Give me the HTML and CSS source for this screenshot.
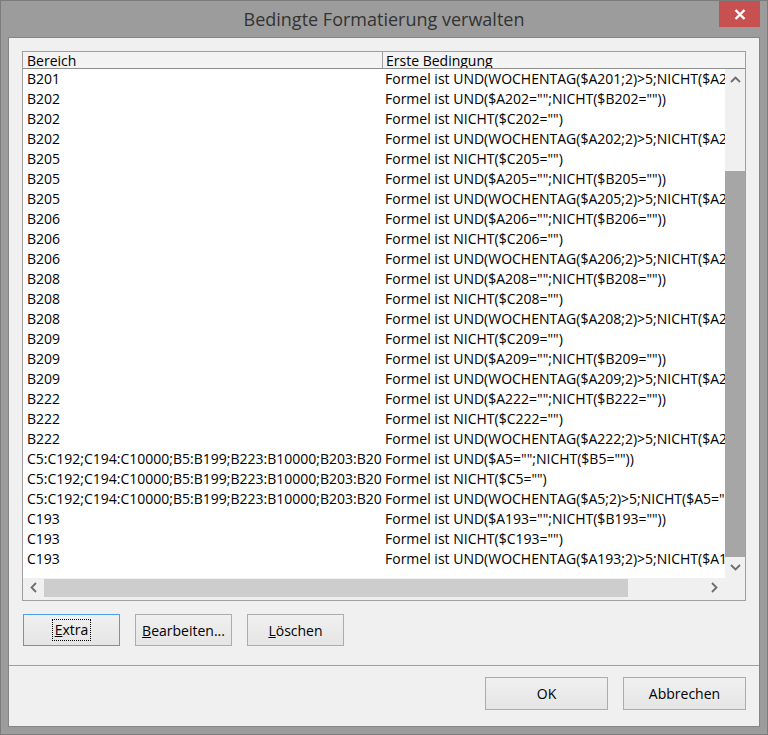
FILE: index.html
```html
<!DOCTYPE html>
<html lang="de">
<head>
    <meta charset="UTF-8">
    <meta name="viewport" content="width=device-width, initial-scale=1.0">
    <title>Bedingte Formatierung verwalten</title>
    <link rel="stylesheet" href="styles.css">
</head>
<body>
    <div class="window">
        <div class="titlebar">
            <span></span>
            <span class="title">Bedingte Formatierung verwalten</span>
            <button class="close" type="button" aria-label="Schließen">
                <svg width="12" height="11" viewBox="0 0 12 11"><path d="M1.5 1 L10.5 10 M10.5 1 L1.5 10" stroke="#fff" stroke-width="2.4" fill="none"/></svg>
            </button>
        </div>

        <div class="client">
            <div class="list">
                <div class="list-header">
                    <div class="col-a">Bereich</div>
                    <div class="col-b">Erste Bedingung</div>
                </div>

                <div class="rows">
                    <div class="row"><span>B201</span><span>Formel ist UND(WOCHENTAG($A201;2)&gt;5;NICHT($A201=""))</span></div>
                    <div class="row"><span>B202</span><span>Formel ist UND($A202="";NICHT($B202=""))</span></div>
                    <div class="row"><span>B202</span><span>Formel ist NICHT($C202="")</span></div>
                    <div class="row"><span>B202</span><span>Formel ist UND(WOCHENTAG($A202;2)&gt;5;NICHT($A202=""))</span></div>
                    <div class="row"><span>B205</span><span>Formel ist NICHT($C205="")</span></div>
                    <div class="row"><span>B205</span><span>Formel ist UND($A205="";NICHT($B205=""))</span></div>
                    <div class="row"><span>B205</span><span>Formel ist UND(WOCHENTAG($A205;2)&gt;5;NICHT($A205=""))</span></div>
                    <div class="row"><span>B206</span><span>Formel ist UND($A206="";NICHT($B206=""))</span></div>
                    <div class="row"><span>B206</span><span>Formel ist NICHT($C206="")</span></div>
                    <div class="row"><span>B206</span><span>Formel ist UND(WOCHENTAG($A206;2)&gt;5;NICHT($A206=""))</span></div>
                    <div class="row"><span>B208</span><span>Formel ist UND($A208="";NICHT($B208=""))</span></div>
                    <div class="row"><span>B208</span><span>Formel ist NICHT($C208="")</span></div>
                    <div class="row"><span>B208</span><span>Formel ist UND(WOCHENTAG($A208;2)&gt;5;NICHT($A208=""))</span></div>
                    <div class="row"><span>B209</span><span>Formel ist NICHT($C209="")</span></div>
                    <div class="row"><span>B209</span><span>Formel ist UND($A209="";NICHT($B209=""))</span></div>
                    <div class="row"><span>B209</span><span>Formel ist UND(WOCHENTAG($A209;2)&gt;5;NICHT($A209=""))</span></div>
                    <div class="row"><span>B222</span><span>Formel ist UND($A222="";NICHT($B222=""))</span></div>
                    <div class="row"><span>B222</span><span>Formel ist NICHT($C222="")</span></div>
                    <div class="row"><span>B222</span><span>Formel ist UND(WOCHENTAG($A222;2)&gt;5;NICHT($A222=""))</span></div>
                    <div class="row"><span>C5:C192;C194:C10000;B5:B199;B223:B10000;B203:B20</span><span>Formel ist UND($A5="";NICHT($B5=""))</span></div>
                    <div class="row"><span>C5:C192;C194:C10000;B5:B199;B223:B10000;B203:B20</span><span>Formel ist NICHT($C5="")</span></div>
                    <div class="row"><span>C5:C192;C194:C10000;B5:B199;B223:B10000;B203:B20</span><span>Formel ist UND(WOCHENTAG($A5;2)&gt;5;NICHT($A5=""))</span></div>
                    <div class="row"><span>C193</span><span>Formel ist UND($A193="";NICHT($B193=""))</span></div>
                    <div class="row"><span>C193</span><span>Formel ist NICHT($C193="")</span></div>
                    <div class="row"><span>C193</span><span>Formel ist UND(WOCHENTAG($A193;2)&gt;5;NICHT($A193=""))</span></div>
                </div>

                <!-- vertical scrollbar, scrolled to the end -->
                <div class="vscroll">
                    <div class="sbtn">
                        <svg width="11" height="7" viewBox="0 0 11 7"><path d="M1 6 L5.5 1.5 L10 6" stroke="#6d6d6d" stroke-width="1.8" fill="none"/></svg>
                    </div>
                    <div class="vtrack"><div class="vthumb"></div></div>
                    <div class="sbtn">
                        <svg width="11" height="7" viewBox="0 0 11 7"><path d="M1 1 L5.5 5.5 L10 1" stroke="#6d6d6d" stroke-width="1.8" fill="none"/></svg>
                    </div>
                </div>

                <div class="hscroll">
                    <div class="sbtn">
                        <svg width="7" height="11" viewBox="0 0 7 11"><path d="M6 1 L1.5 5.5 L6 10" stroke="#6d6d6d" stroke-width="1.8" fill="none"/></svg>
                    </div>
                    <div class="htrack"><div class="hthumb"></div></div>
                    <div class="sbtn">
                        <svg width="7" height="11" viewBox="0 0 7 11"><path d="M1 1 L5.5 5.5 L1 10" stroke="#6d6d6d" stroke-width="1.8" fill="none"/></svg>
                    </div>
                </div>
                <div class="corner"></div>
            </div>

            <div class="actions">
                <button type="button" class="btn default"><span class="focus"><u>E</u>xtra</span></button>
                <button type="button" class="btn"><u>B</u>earbeiten...</button>
                <button type="button" class="btn"><u>L</u>öschen</button>
            </div>

            <div class="separator"></div>

            <div class="footer">
                <button type="button" class="btn wide">OK</button>
                <button type="button" class="btn wide">Abbrechen</button>
            </div>
        </div>
    </div>
</body>
</html>
```

FILE: styles.css
```css
:root {
    --frame: #9c9c9c;
    --frame-edge: #7c7c7c;
    --face: #f0f0f0;
    --border-soft: #a0a0a0;
    --btn-border: #acacac;
    --text-dark: #000;
}

* {
    margin: 0;
    padding: 0;
    box-sizing: border-box;
    font-family: 'Open Sans', 'Noto Sans', sans-serif;
}

body {
    width: 768px;
    height: 735px;
    overflow: hidden;
}

.window {
    width: 768px;
    height: 735px;
    background: var(--frame);
    border: 1px solid var(--frame-edge);
    padding: 0 7px 7px;
    display: flex;
    flex-direction: column;
}

.titlebar {
    height: 36px;
    display: grid;
    grid-template-columns: 41px 1fr 41px;
}

.title {
    text-align: center;
    font-size: 18px;
    line-height: 24px;
    padding-top: 6px;
    color: #333;
}

.close {
    width: 41px;
    height: 26px;
    border: none;
    background: #c75050;
    display: flex;
    align-items: center;
    justify-content: center;
}

.client {
    flex: 1;
    background: var(--face);
    border: 1px solid #858585;
    display: flex;
    flex-direction: column;
}

.list {
    margin: 13px 13px 0;
    height: 550px;
    border: 1px solid var(--border-soft);
    background: #fff;
    display: grid;
    grid-template-columns: 1fr 20px;
    grid-template-rows: 17px 509px 22px;
}

.list-header {
    grid-column: 1 / 3;
    display: grid;
    grid-template-columns: 360px 1fr;
    background: #f3f3f3;
    border-bottom: 1px solid #8e8e8e;
    font-size: 14px;
    line-height: 16px;
    color: var(--text-dark);
    overflow: hidden;
}

.list-header .col-a {
    padding: 1px 0 0 4px;
    border-right: 1px solid var(--border-soft);
    overflow: hidden;
}

.list-header .col-b {
    padding: 1px 0 0 3px;
    overflow: hidden;
}

.rows {
    overflow: hidden;
}

.row {
    display: grid;
    grid-template-columns: 360px 1fr;
    height: 20px;
    font-size: 14px;
    line-height: 20px;
    color: var(--text-dark);
    white-space: nowrap;
}

.row span {
    overflow: hidden;
}

.row span:first-child {
    padding-left: 4px;
}

.row span:last-child {
    padding-left: 2px;
}

.vscroll {
    background: var(--face);
    display: flex;
    flex-direction: column;
}

.sbtn {
    flex: 0 0 21px;
    display: flex;
    align-items: center;
    justify-content: center;
}

.vtrack {
    flex: 1;
    display: flex;
    flex-direction: column;
    justify-content: flex-end;
}

.vthumb {
    height: 386px;
    background: #a6a6a6;
}

.hscroll {
    background: var(--face);
    display: flex;
    padding-bottom: 3px;
}

.htrack {
    flex: 1;
    padding-top: 1px;
}

.hthumb {
    width: 584px;
    height: 100%;
    background: #cdcdcd;
}

.corner {
    background: var(--face);
}

.actions {
    display: flex;
    gap: 15px;
    padding: 13px 0 0 14px;
}

.btn {
    width: 97px;
    height: 32px;
    border: 1px solid var(--btn-border);
    background: linear-gradient(#f0f0f0, #e5e5e5);
    font-size: 14px;
    color: var(--text-dark);
    display: flex;
    align-items: center;
    justify-content: center;
}

.btn.default {
    border-color: #4a9ee9;
}

.btn .focus {
    outline: 1px dotted #000;
    padding: 0 2px;
    line-height: 20px;
}

.btn.wide {
    width: 123px;
    height: 33px;
}

.separator {
    margin-top: 19px;
    border-top: 1px solid #a0a0a0;
}

.footer {
    flex: 1;
    display: flex;
    justify-content: flex-end;
    align-items: flex-start;
    gap: 15px;
    padding: 11px 13px 0 0;
}
```
